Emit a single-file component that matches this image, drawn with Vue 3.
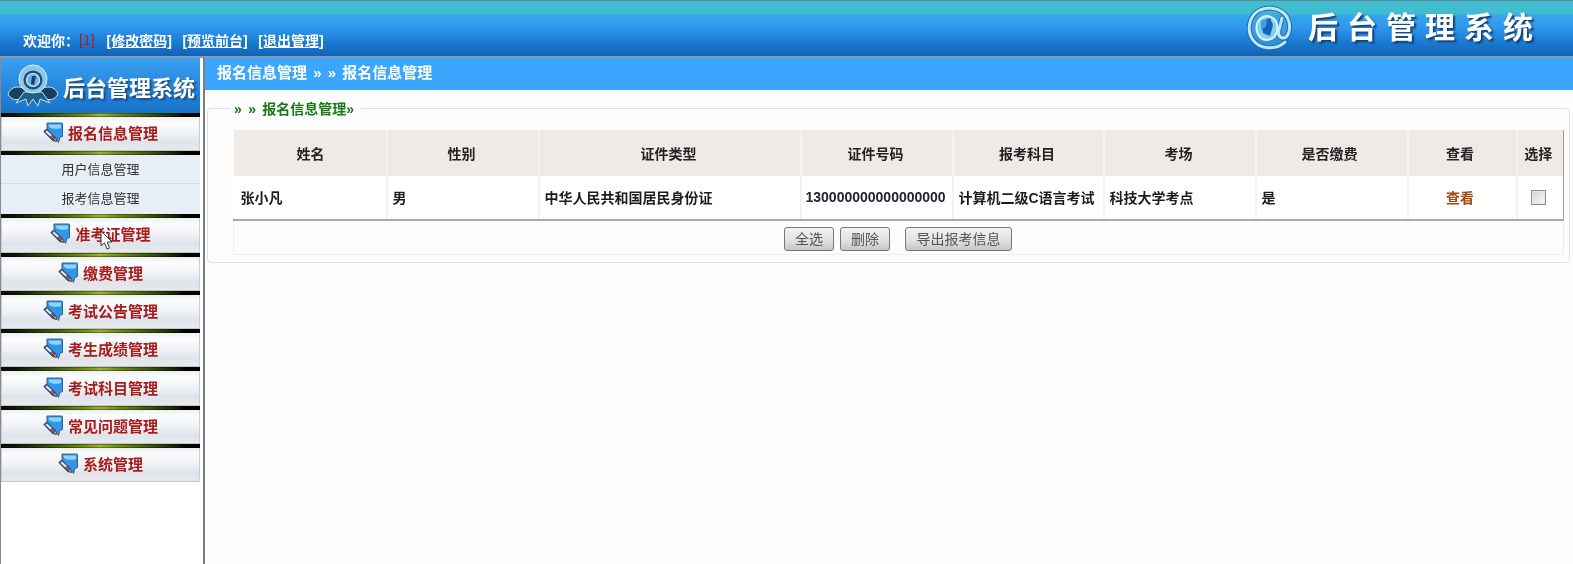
<script setup>
const navLinks = ['[修改密码]', '[预览前台]', '[退出管理]']
const menu = [
  { name: '报名信息管理', subs: ['用户信息管理', '报考信息管理'] },
  { name: '准考证管理' },
  { name: '缴费管理' },
  { name: '考试公告管理' },
  { name: '考生成绩管理' },
  { name: '考试科目管理' },
  { name: '常见问题管理' },
  { name: '系统管理' },
]
const cols = [
  { label: '姓名', width: 153 },
  { label: '性别', width: 152 },
  { label: '证件类型', width: 262 },
  { label: '证件号码', width: 152 },
  { label: '报考科目', width: 151 },
  { label: '考场', width: 152 },
  { label: '是否缴费', width: 152 },
  { label: '查看', width: 109 },
  { label: '选择', width: 47 },
]
const row = ['张小凡', '男', '中华人民共和国居民身份证', '130000000000000000', '计算机二级C语言考试', '科技大学考点', '是']
const atRing = 'M39 37 C31 45 14 45 7 35 C0 25 3 10 14 5 C26 0 40 5 43 17 C45 27 41 34 36 33 C33 32 32 29 33 25 L36 13'
</script>

<template>
  <div class="page">
    <header class="top">
      <div class="welcome">
        <span>欢迎你：</span>
        <span class="uid">[1]</span>
        <a v-for="l in navLinks" :key="l" class="toplink">{{ l }}</a>
      </div>
      <div class="brand">
        <svg class="at" viewBox="0 0 46 46" width="46" height="46">
          <circle cx="23" cy="23" r="20" fill="#4aa6dc" opacity="0.55" />
          <path :d="atRing" fill="none" stroke="#1f6fb0" stroke-width="5" stroke-linecap="round" />
          <path :d="atRing" fill="none" stroke="#bdeaf2" stroke-width="3" stroke-linecap="round" />
          <ellipse cx="21" cy="23" rx="10.5" ry="12" fill="#7fd0ea" stroke="#d8f3f6" stroke-width="2" />
          <path d="M15 16 L24 13 L27 20 L24 31 L17 28 Z" fill="#1a62b8" />
          <path d="M15 16 L21 14 L20 22 L15 24 Z" fill="#38a0e0" />
        </svg>
        <span class="brand-title">后台管理系统</span>
      </div>
    </header>

    <div class="body">
      <aside class="side">
        <div class="side-banner">
          <svg class="octo" viewBox="0 0 52 44" width="52" height="44">
            <path d="M1 30 C4 22 12 21 20 26 L15 34 C10 37 4 36 1 30 Z" fill="#16405f" stroke="#cfe8f2" stroke-width="1" />
            <path d="M51 30 C48 22 40 21 32 26 L37 34 C42 37 48 36 51 30 Z" fill="#16405f" stroke="#cfe8f2" stroke-width="1" />
            <path d="M17 28 L9 39 L19 35 L21 42 L26 35 L31 42 L33 35 L43 39 L35 28 Z" fill="#1f5f8c" stroke="#bfe2f0" stroke-width="1" />
            <circle cx="26" cy="15" r="14" fill="#8cc8e6" stroke="#d6eef6" stroke-width="1" />
            <circle cx="26" cy="16" r="9.5" fill="#1b4f86" />
            <circle cx="26" cy="16" r="6.5" fill="#6db2d8" stroke="#e2f2f8" stroke-width="1.2" />
            <path d="M25 12 L29 12 L27 21 L24 20 Z" fill="#123f73" />
          </svg>
          <span class="side-title">后台管理系统</span>
        </div>
        <div class="bar"></div>
        <template v-for="(m, i) in menu" :key="m.name">
          <div class="mbtn">
            <svg class="micon" viewBox="0 0 20 21" width="20" height="21">
              <path d="M4 1 H18.5 A1 1 0 0 1 19.5 2 V14 A1 1 0 0 1 18.5 15 H17 L15.5 20.5 L12 15 L7 12 L4 6 Z" fill="#2f97ea" stroke="#3b5f86" stroke-width="1" />
              <path d="M5.5 2.5 H18 V6 C14 7.5 9 7 6 5 Z" fill="#8fd4fa" />
              <path d="M0.8 9.5 L3.5 7 L12.5 15.5 L13.5 19.5 L9.5 18.5 Z" fill="#3a5a8c" stroke="#26324e" stroke-width="0.8" />
              <path d="M2.5 10 L4 8.5 L9 13 L7.5 14.5 Z" fill="#dfe8f2" />
              <path d="M7.5 14.5 L9 13 L11.5 15.5 L10 17 Z" fill="#c8484a" />
              <path d="M11 17.5 L12.5 16.2 L13.2 19 Z" fill="#e6c040" />
            </svg>
            <span>{{ m.name }}</span>
          </div>
          <div v-if="i < menu.length - 1" class="bar"></div>
          <div v-if="m.subs" class="subs">
            <div v-for="s in m.subs" :key="s" class="sub">{{ s }}</div>
          </div>
          <div v-if="m.subs" class="bar"></div>
        </template>
        <svg class="cursor" viewBox="0 0 13 21" width="13" height="21">
          <path d="M1 1 L1 16 L4.5 12.8 L7 19 L9.6 18 L7.2 12 L12 12 Z" fill="#fff" stroke="#3a3a3a" stroke-width="1" />
        </svg>
      </aside>

      <main class="main">
        <div class="crumb">报名信息管理 » » 报名信息管理</div>
        <fieldset class="box">
          <legend>» » 报名信息管理»</legend>
          <table class="grid">
            <colgroup>
              <col v-for="c in cols" :key="c.label" :style="{ width: c.width + 'px' }" />
            </colgroup>
            <thead>
              <tr>
                <th v-for="c in cols" :key="c.label">{{ c.label }}</th>
              </tr>
            </thead>
            <tbody>
              <tr class="data">
                <td v-for="(v, i) in row" :key="i" :class="{ num: i === 3 }">{{ v }}</td>
                <td class="center"><a class="view">查看</a></td>
                <td class="center"><input class="check" type="checkbox" /></td>
              </tr>
              <tr class="actions">
                <td colspan="9">
                  <div class="btns">
                    <button class="btn b-sm">全选</button>
                    <button class="btn b-sm">删除</button>
                    <button class="btn b-lg">导出报考信息</button>
                  </div>
                </td>
              </tr>
            </tbody>
          </table>
        </fieldset>
      </main>
    </div>
  </div>
</template>

<style scoped>
.page {
  width: 1573px;
  height: 564px;
  overflow: hidden;
  display: flex;
  flex-direction: column;
  background: #fdfdfd;
  font-family: "Liberation Sans", "Noto Sans CJK SC", sans-serif;
  font-size: 14px;
  color: #222;
  filter: blur(0.35px);
}
.top {
  flex: none;
  box-sizing: border-box;
  border-top: 1px solid #5f8a96;
  border-bottom: 2px solid #8d9aa6;
  height: 58px;
  display: flex;
  justify-content: space-between;
  background: linear-gradient(180deg, #40bdd0 0, #40bdd0 12px, #36a6ee 15px, #2f98ee 26px, #1a78d0 42px, #0f64ba 55px);
}
.welcome {
  display: flex;
  align-items: center;
  height: 20px;
  margin-top: 29px;
  padding-left: 23px;
  color: #fff;
  font-weight: 700;
  font-size: 14px;
}
.uid {
  color: #b01c1c;
  font-weight: 400;
  margin-right: 12px;
}
.toplink {
  color: #fff;
  text-decoration: underline;
  margin-right: 10.5px;
}
.brand {
  display: flex;
  align-items: center;
  height: 54px;
  padding-right: 40px;
}
.at {
  margin-right: 16px;
}
.brand-title {
  color: #fff;
  font-family: "Noto Sans CJK SC", sans-serif;
  font-weight: 700;
  font-size: 30px;
  line-height: 1;
  letter-spacing: 9px;
  margin-right: -9px;
  margin-top: -6px;
  text-shadow: 2px 2px 2px #123f73;
}
.body {
  flex: 1;
  display: flex;
  min-height: 0;
}
.side {
  position: relative;
  width: 199px;
  flex: none;
  border-left: 1px solid #8a8a8a;
  border-right: 2px solid #7d7d7d;
  padding-right: 3px;
  background: #fff;
}
.side-banner {
  height: 55px;
  display: flex;
  align-items: center;
  gap: 4px;
  padding-left: 6px;
  background: linear-gradient(180deg, #3aa0f0, #1f7fd6 70%, #1a74c8);
}
.side-title {
  color: #fff;
  font-family: "Noto Sans CJK SC", sans-serif;
  font-weight: 700;
  font-size: 22px;
  line-height: 1;
  text-shadow: 2px 2px 2px #1c4a78;
}
.bar {
  height: 4px;
  background:
    linear-gradient(180deg, rgba(0, 0, 0, 0.55), rgba(0, 0, 0, 0) 50%, rgba(0, 0, 0, 0.55)),
    linear-gradient(90deg, #0c0c0c 0, #101a06 7%, #3d5408 22%, #86a41a 42%, #b4d030 50%, #86a41a 58%, #3d5408 78%, #101a06 90%, #000 92%, #000 100%);
}
.mbtn {
  height: 34.3px;
  box-sizing: border-box;
  padding-bottom: 2px;
  display: flex;
  align-items: center;
  justify-content: center;
  gap: 5px;
  color: #a81c1c;
  font-weight: 700;
  font-size: 15px;
  border-left: 1px solid #c6cdd4;
  border-right: 1px solid #c6cdd4;
  border-bottom: 1px solid #bfc5cb;
  background: linear-gradient(180deg, #eceff2 0, #fbfcfd 18%, #eff2f5 50%, #dfe4ea 75%, #e6e9ed 100%);
}
.subs {
  background: #e7eef6;
}
.sub {
  height: 30px;
  line-height: 30px;
  text-align: center;
  font-size: 13px;
  color: #333;
  box-sizing: border-box;
}
.sub:first-child {
  height: 29px;
  border-bottom: 1px solid #d5dbe2;
}
.cursor {
  position: absolute;
  left: 99px;
  top: 172px;
}
.main {
  flex: 1;
  min-width: 0;
}
.crumb {
  height: 32px;
  line-height: 30px;
  padding-left: 12px;
  background: #3aa6fd;
  color: #fff;
  font-weight: 700;
  font-size: 15px;
  word-spacing: 2px;
}
.box {
  margin: 8px 3px 0 2px;
  padding: 0 6px 7px 25px;
  border: 1px solid #dcdfe2;
  border-radius: 4px;
  min-width: 0;
}
.box legend {
  height: 20px;
  line-height: 23px;
  padding: 0 7px 0 4px;
  margin-left: -3px;
  color: #177a17;
  font-weight: 700;
  font-size: 14px;
  word-spacing: 2.5px;
}
.grid {
  margin-top: 12px;
  width: 1330px;
  table-layout: fixed;
  border-collapse: collapse;
}
.grid th {
  height: 46px;
  padding: 0 2px 0 0;
  background: #f0eae6;
  color: #222;
  font-weight: 700;
  font-size: 14px;
  border-right: 2px solid #f6f2ef;
}
.grid th:first-child {
  padding: 0 0 0 2px;
}
.grid th:nth-child(n + 7) {
  padding: 0 4px 0 0;
}
.grid th:last-child {
  border-right: 1px solid #9a9a9a;
}
.data td {
  height: 44px;
  box-sizing: border-box;
  padding: 0 0 2px 5px;
  font-weight: 700;
  font-size: 14px;
  color: #1c1c1c;
  white-space: nowrap;
  border-right: 2px solid #f3f3f3;
  border-bottom: 2px solid #a9a9a9;
  background: #fff;
}
.data td:first-child {
  padding-left: 7px;
}
.data td:last-child {
  border-right: 1px solid #9a9a9a;
}
.data td.num {
  padding-left: 4px;
  color: #223;
}
.data td.center {
  padding: 0 4px 2px 0;
  text-align: center;
}
.view {
  color: #a3490f;
  font-weight: 700;
}
.check {
  appearance: none;
  display: inline-block;
  width: 15px;
  height: 15px;
  margin: 0;
  vertical-align: middle;
  box-sizing: border-box;
  border: 1px solid #8c8f92;
  background: linear-gradient(135deg, #d4d6d8, #f6f6f6);
  box-shadow: inset 0 0 0 1px #e6e7e8;
}
.actions td {
  height: 33px;
  padding: 0;
  border: 1px solid #eceef0;
  border-top: none;
}
.btns {
  display: flex;
  padding-left: 550px;
  padding-top: 5px;
  box-sizing: border-box;
  align-items: flex-start;
  height: 32px;
}
.btn {
  height: 24px;
  padding: 0;
  box-sizing: border-box;
  border: 1px solid #777;
  border-radius: 3px;
  background: linear-gradient(180deg, #f2f2f2, #e2e2e2 55%, #c6c6c6);
  color: #555;
  font-family: "Liberation Sans", "Noto Sans CJK SC", sans-serif;
  font-size: 14px;
  line-height: 20px;
}
.b-sm {
  width: 50px;
  margin-right: 6px;
}
.b-lg {
  width: 107px;
  margin-left: 9px;
}
</style>
